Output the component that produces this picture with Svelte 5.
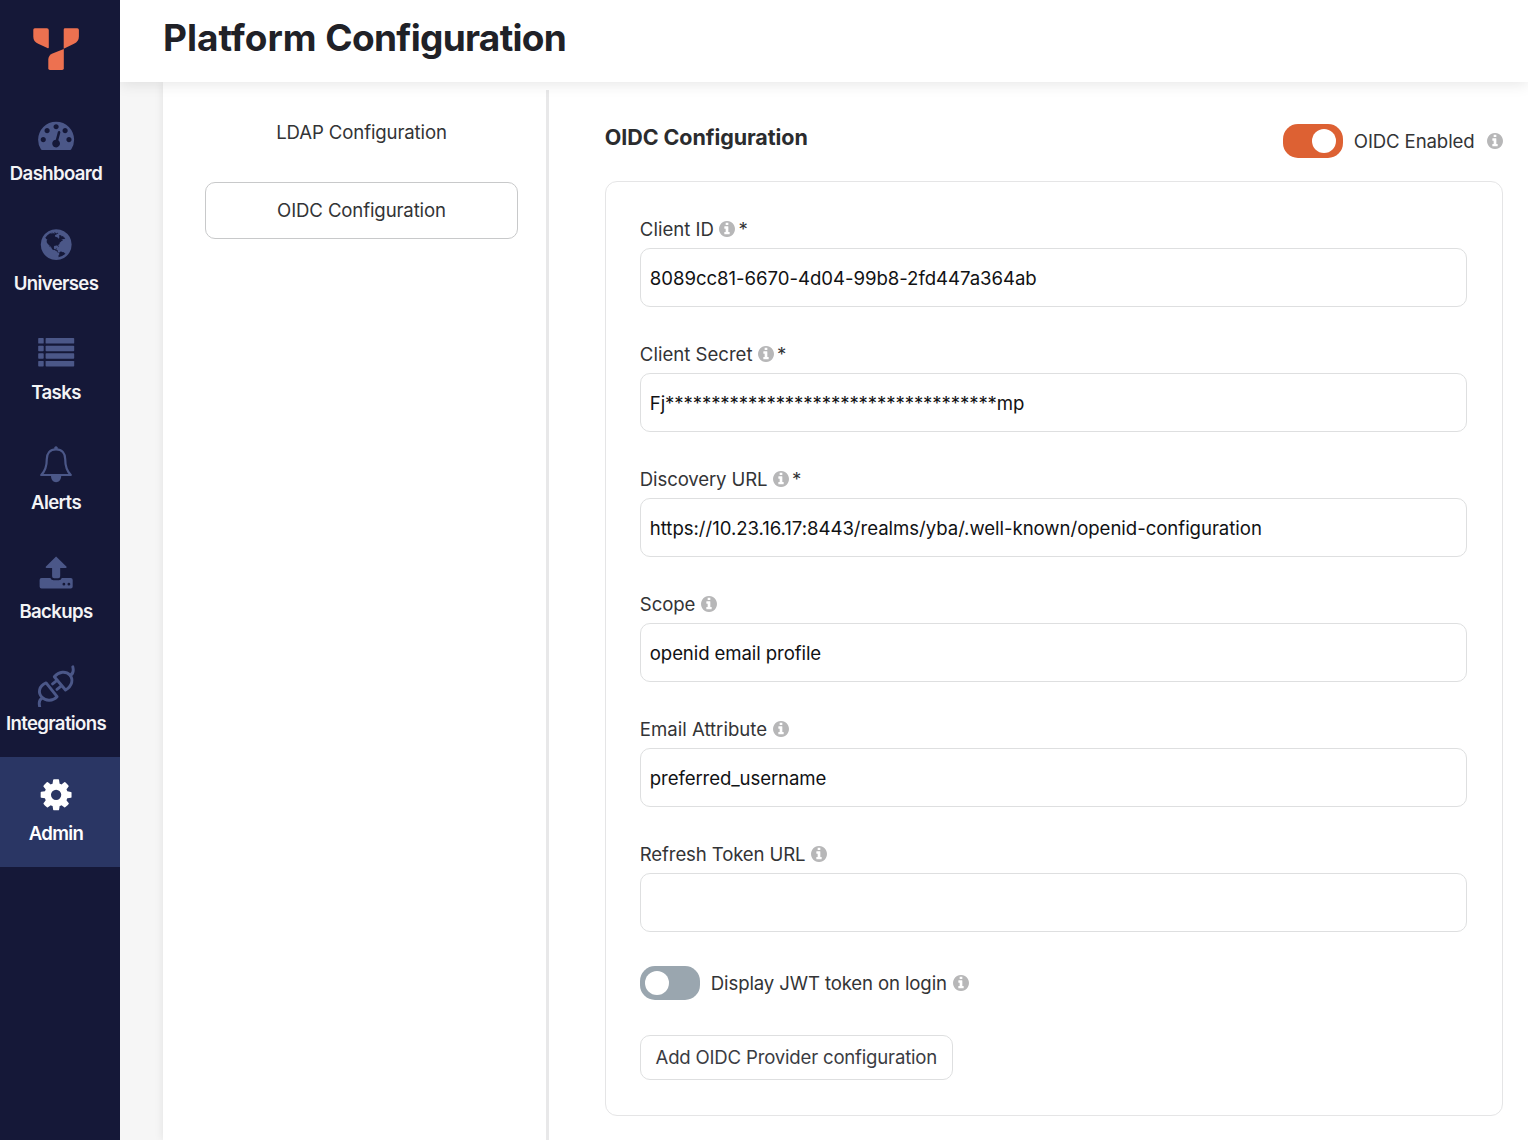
<script>
  const nav = [
    { id: 'dashboard', label: 'Dashboard', top: 97 },
    { id: 'universes', label: 'Universes', top: 206.5 },
    { id: 'tasks', label: 'Tasks', top: 316 },
    { id: 'alerts', label: 'Alerts', top: 425.5 },
    { id: 'backups', label: 'Backups', top: 535 },
    { id: 'integrations', label: 'Integrations', top: 647 },
    { id: 'admin', label: 'Admin', top: 757 }
  ];

  const fields = [
    { id: 'client-id', label: 'Client ID', required: true, value: '8089cc81-6670-4d04-99b8-2fd447a364ab' },
    { id: 'secret', label: 'Client Secret', required: true, value: 'Fj************************************mp' },
    { id: 'discovery', label: 'Discovery URL', required: true, value: 'https://10.23.16.17:8443/realms/yba/.well-known/openid-configuration' },
    { id: 'scope', label: 'Scope', required: false, value: 'openid email profile' },
    { id: 'email', label: 'Email Attribute', required: false, value: 'preferred_username' },
    { id: 'refresh', label: 'Refresh Token URL', required: false, value: '' }
  ];

  let enabled = $state(true);
  let showJwt = $state(false);
</script>

{#snippet info()}
  <svg class="info" viewBox="128 128 1536 1536" aria-hidden="true">
    <path d="M1152 1376v-160q0-14-9-23t-23-9h-96v-512q0-14-9-23t-23-9h-320q-14 0-23 9t-9 23v160q0 14 9 23t23 9h96v320h-96q-14 0-23 9t-9 23v160q0 14 9 23t23 9h448q14 0 23-9t9-23zm-128-896v-160q0-14-9-23t-23-9h-192q-14 0-23 9t-9 23v160q0 14 9 23t23 9h192q14 0 23-9t9-23zm640 416q0 209-103 385.5t-279.5 279.5-385.5 103-385.5-103-279.5-279.5-103-385.5 103-385.5 279.5-279.5 385.5-103 385.5 103 279.5 279.5 103 385.5z" />
  </svg>
{/snippet}

<div class="app">
  <aside class="sidebar">
    <div class="brand">
      <svg width="120" height="97" viewBox="0 0 120 97">
        <path d="M34.8 28.3h12.1q1.9 0 1.9 1.9v17q0 1.4-1.4.8l-9.2-4.2q-4.9-2.1-4.9-7V29.800q0-1.500 1.500-1.500z" />
        <path d="M65 28.300h12.300q1.600 0 1.600 1.600v6.700q0 5.100-4.900 7.200l-10.300 5V29.700q0-1.400 1.300-1.400z" />
        <path d="M63.800 49v19.300q0 1.600-1.600 1.600H49.900q-1.600 0-1.600-1.600v-8.700q0-4.300 4.200-6.200z" />
      </svg>
    </div>
    <nav>
      {#each nav as item (item.id)}
        <a class="nav-item {item.id}" class:active={item.id === 'admin'} href="#{item.id}">
          <svg width="112" height="60" viewBox="0 {item.top} 112 60">
            {#if item.id === 'dashboard'}
              <g transform="translate(38.1 116.500) scale(.0201)">
                <path d="M384 1152q0-53-37.5-90.5t-90.5-37.500-90.500 37.500-37.500 90.500 37.500 90.500 90.500 37.500 90.500-37.500 37.500-90.500zm192-448q0-53-37.500-90.500t-90.500-37.500-90.500 37.500-37.500 90.500 37.500 90.500 90.500 37.500 90.500-37.500 37.500-90.500zm428 481l101-382q6-26-7.500-48.500t-38.500-29.500-48 6.500-30 39.500l-101 382q-60 5-107 43.500t-63 98.500q-20 77 20 146t117 89 146-20 89-117q16-60-6-117t-72-91zm660-33q0-53-37.500-90.500t-90.500-37.500-90.500 37.500-37.500 90.500 37.500 90.500 90.500 37.500 90.500-37.500 37.500-90.500zm-640-640q0-53-37.500-90.500t-90.500-37.500-90.500 37.500-37.500 90.500 37.500 90.500 90.500 37.500 90.500-37.500 37.500-90.500zm448 192q0-53-37.500-90.500t-90.500-37.500-90.500 37.500-37.500 90.500 37.500 90.500 90.500 37.500 90.500-37.500 37.500-90.500zm320 448q0 261-141 483-19 29-54 29h-1402q-35 0-54-29-141-221-141-483 0-182 71-348t191-286 286-191 348-71 348 71 286 191 191 286 71 348z" />
              </g>
            {:else if item.id === 'universes'}
              <g transform="translate(38.200 226.100) scale(.0201)">
                <path d="M896 128q209 0 385.5 103t279.5 279.5 103 385.5-103 385.5-279.5 279.5-385.5 103-385.5-103-279.5-279.5-103-385.5 103-385.5 279.5-279.5 385.5-103zm274 521q-2 1-9.5 9.5t-13.5 9.5q2 0 4.5-5t5-11 3.5-7q6-7 22-15 14-6 52-12 34-8 51 11-2-2 9.500-13t14.500-12q3-2 15-4.500t15-7.500l2-22q-12 1-17.500-7t-6.500-21q0 2-6 8 0-7-4.500-8t-11.500 1-9 1q-10-3-15-7.500t-8-16.500-4-15q-2-5-9.500-11t-9.500-10q-1-2-2.500-5.500t-3-6.500-4-5.500-5.500-2.500-7 5-7.500 10-4.500 5q-3-2-6-1.500t-4.500 1-4.500 3-5 3.500q-3 2-8.500 3t-8.500 2q15-5-1-11-10-4-16-3 9-4 7.500-12t-8.500-14h5q-1-4-8.500-8.500t-17.500-8.500-13-6q-8-5-34-9.500t-33-.5q-5 6-4.500 10.500t4 14 3.500 12.500q1 6-5.500 13t-6.500 12q0 7 14 15.500t10 21.500q-3 8-16 16t-16 12q-5 8-1.500 18.500t10.500 16.500q2 2 1.500 4t-3.500 4.500-5.500 4-6.500 3.500l-3 2q-11 5-20.500-6t-13.500-26q-7-25-16-30-23-8-29 1-5-13-41-26-25-9-58-4 6-1 0-15-7-15-19-12 3-6 4-17.500t1-13.500q3-13 12-23 1-1 7-8.500t9.500-13.500.5-6q35 4 50-11 5-5 11.500-17t10.500-17q9-6 14-5.500t14.500 5.500 14.500 5q14 1 15.500-11t-7.500-20q12 1 3-17-4-7-8-9-12-4-27 5-8 4 2 8-1-1-9.500 10.500t-16.500 17.500-16-5q-1-1-5.500-13.500t-9.500-13.500q-8 0-16 15 3-8-11-15t-24-8q19-12-8-27-7-4-20.500-5t-19.500 4q-5 7-5.500 11.500t5 8 10.500 5.500 11.500 4 8.500 3q14 10 8 14-2 1-8.500 3.500t-11.500 4.500-6 4q-3 4 0 14t-2 14q-5-5-9-17.500t-7-16.500q7 9-25 6l-10-1q-4 0-16 2t-20.500 1-13.500-8q-4-8 0-20 1-4 4-2-4-3-11-9.500t-10-8.500q-46 15-94 41 6 1 12-1 5-2 13-6.500t10-5.500q34-14 42-7l5-5q14 16 20 25-7-4-30-1-20 6-22 12 7 12 5 18-4-3-11.500-10t-14.500-11-15-5q-16 0-22 1-146 80-235 222 7 7 12 8 4 1 5 9t2.500 11 11.500-3q9 8 3 19 1-1 44 27 19 17 21 21 3 11-10 18-1-2-9-9t-9-4q-3 5 .5 18.500t10.500 12.500q-7 0-9.500 16t-2.500 35.500-1 23.500l2 1q-3 12 5.500 34.500t21.500 19.500q-13 3 20 43 6 8 8 9 3 2 12 7.500t15 10 10 10.500q4 5 10 22.500t14 23.500q-2 6 9.500 20t10.500 23q-1 0-2.500 1t-2.500 1q3 7 15.500 14t15.500 13q1 3 2 10t3 11 8 2q2-20-24-62-15-25-17-29-3-5-5.500-15.500t-4.500-14.500q2 0 6 1.500t8.500 3.500 7.500 4 2 3q-3 7 2 17.500t12 18.500 17 19 12 13q6 6 14 19.500t0 13.500q9 0 20 10.500t17 19.500q5 8 8 26t5 24q2 7 8.500 13.500t12.500 9.500l16 8 13 7q5 2 18.500 10.500t21.500 11.500q10 4 16 4t14.500-2.500 13.500-3.500q15-2 29 15t21 21q36 19 55 11-2 1 .5 7.500t8 15.500 9 14.500 5.500 8.500q5 6 18 15t18 15q6-4 7-9-3 8 7 20t18 10q14-3 14-32-31 15-49-18 0-1-2.500-5.500t-4-8.500-2.500-8.500 0-7.500 5-3q9 0 10-3.500t-2-12.500-4-13q-1-8-11-20t-12-15q-5 9-16 8t-16-9q0 1-1.500 5.500t-1.500 6.500q-13 0-15-1 1-3 2.500-17.500t3.500-22.500q1-4 5.500-12t7.500-14.500 4-12.500-4.500-9.500-17.500-2.500q-19 1-26 20-1 3-3 10.500t-5 11.500-9 7q-7 3-24 2t-24-5q-13-8-22.500-29t-9.500-37q0-10 2.500-26.500t3-25-5.500-24.500q3-2 9-9.500t10-10.500q2-1 4.500-1.500t4.500 0 4-1.500 3-6q-1-1-4-3-3-3-4-3 7 3 28.500-1.500t27.500 1.500q15 11 22-2 0-1-2.500-9.500t-.5-13.500q5 27 29 9 3 3 15.500 5t17.500 5q3 2 7 5.500t5.500 4.500 5-.5 8.500-6.500q10 14 12 24 11 40 19 44 7 3 11 2t4.500-9.500 0-14-1.500-12.500l-1-8v-18l-1-8q-15-3-18.500-12t1.500-18.500 15-18.500q1-1 8-3.500t15.500-6.500 12.500-8q21-19 15-35 7 0 11-9-1 0-5-3t-7.500-5-4.500-2q9-5 2-16 5-3 7.500-11t7.500-10q9 12 21 2 7-8 1-16 5-7 20.500-10.500t18.500-9.500q7 2 8-2t1-12 3-12q4-5 15-9t13-5l17-11q3-4 0-4 18 2 31-11 10-11-6-20 3-6-3-9.500t-15-5.500q3-1 11.500-.5t10.500-1.500q15-10-7-16-17-5-43 12zm-163 877q206-36 351-189-3-3-12.500-4.500t-12.500-3.500q-18-7-24-8 1-7-2.500-13t-8-9-12.500-8-11-7q-2-2-7-6t-7-5.500-7.500-4.500-8.500-2-10 1l-3 1q-3 1-5.500 2.500t-5.500 3-4 3 0 2.500q-21-17-36-22-5-1-11-5.500t-10.500-7-10-1.500-11.500 7q-5 5-6 15t-2 13q-7-5 0-17.500t2-18.500q-3-6-10.500-4.500t-12 4.500-11.500 8.500-9 6.500-8.500 5.500-8.500 7.500q-3 4-6 12t-5 11q-2-4-11.500-6.500t-9.500-5.500q2 10 4 35t5 38q7 31-12 48-27 25-29 40-4 22 12 26 0 7-8 20.500t-7 21.500q0 6 2 16z" />
              </g>
            {:else if item.id === 'tasks'}
              {#each [338.100, 345.700, 353.300, 360.900] as y}
                <rect x="38.200" {y} width="5.500" height="5.500" rx=".7" />
                <rect x="45.600" {y} width="28.600" height="5.500" rx=".7" />
              {/each}
            {:else if item.id === 'alerts'}
              <path class="line" d="M56 448.900c-6.300 0-9.200 4.300-9.200 9.700 0 7.800-1.400 12-5.600 15.900h29.600c-4.200-3.900-5.600-8.100-5.600-15.900 0-5.400-2.900-9.700-9.200-9.700z" />
              <path d="M54.300 446.700q1.700-1.700 3.400 0v2.500h-3.400zM51 475.500h10.200c0 3.700-2.200 6.200-5.100 6.200S51 479.200 51 475.500z" />
            {:else if item.id === 'backups'}
              <path d="M56.100 556.600l10.500 10.100q.4 1.100-.7 1.300h-5.700v8.200q0 2-2 2h-4.100q-2 0-2-2V568h-5.700q-1.100-.2-.700-1.300z" />
              <path fill-rule="evenodd" d="M41.500 578.100h8.900q.9 2.200 3.100 2.200h5.300q2.200 0 3-2.200h9q1.900 0 1.900 1.900v6.600q0 1.900-1.900 1.900H41.500q-1.900 0-1.900-1.900V580q0-1.900 1.900-1.900zm22.400 4.700a1.400 1.400 0 100 2.800 1.400 1.400 0 000-2.800zm5 0a1.400 1.400 0 100 2.800 1.400 1.400 0 000-2.800z" />
            {:else if item.id === 'integrations'}
              <g class="line plug">
                <path d="M46.100 682.900l11 13.800c-4.200 4.400-11.200 4.800-15.100.6-4.300-4.600-3.300-11.300 4.100-14.400z" />
                <path d="M54.300 676.700c4.700-5.400 11.600-5.900 15.500-1.700 3.900 4.300 2.500 10.900-4.300 15z" />
                <path d="M42 698.300c-3.300 1.500-3.200 4.700-2.300 8.600M70.200 675.300c3.500-1.500 3.500-4.700 2.600-8.500M52.600 683.900l4.400-3.500M57 689.400l4.400-3.500" />
              </g>
            {:else}
              <g transform="translate(38.100 776.800) scale(.0201)">
                <path d="M1152 896q0-106-75-181t-181-75-181 75-75 181 75 181 181 75 181-75 75-181zm512-109v222q0 12-8 23t-20 13l-185 28q-19 54-39 91 35 50 107 138 10 12 10 25t-9 23q-27 37-99 108t-94 71q-12 0-26-9l-138-108q-44 23-91 38-16 136-29 186-7 28-36 28h-222q-14 0-24.500-8.500t-11.500-21.500l-28-184q-49-16-90-37l-141 107q-10 9-25 9-14 0-25-11-126-114-165-168-7-10-7-23 0-12 8-23 15-21 51-66.500t54-70.500q-27-50-41-99l-183-27q-13-2-21-12.500t-8-23.500v-222q0-12 8-23t19-13l186-28q14-46 39-92-40-57-107-138-10-12-10-24 0-10 9-23 26-36 98.500-107.500t94.500-71.500q13 0 26 10l138 107q44-23 91-38 16-136 29-186 7-28 36-28h222q14 0 24.500 8.500t11.500 21.500l28 184q49 16 90 37l142-107q9-9 24-9 13 0 25 10 129 119 165 170 7 8 7 22 0 12-8 23-15 21-51 66.500t-54 70.500q26 50 41 98l183 28q13 2 21 12.500t8 23.500z" />
              </g>
            {/if}
          </svg>
          <span>{item.label}</span>
        </a>
      {/each}
    </nav>
  </aside>

  <div class="page">
    <header><h1><span class="lead">Platform</span> <span class="rest">Configuration</span></h1></header>
    <main>
      <div class="panel">
        <div class="tabs">
          <button class="tab ldap">LDAP Configuration</button>
          <button class="tab selected">OIDC Configuration</button>
        </div>
        <section class="content">
          <div class="heading">
            <h2>OIDC Configuration</h2>
            <div class="enable">
              <button class="switch" class:on={enabled} aria-label="OIDC Enabled" onclick={() => (enabled = !enabled)}><i></i></button>
              <span class="enable-text">OIDC Enabled</span>
              {@render info()}
            </div>
          </div>
          <div class="card">
            {#each fields as field (field.id)}
              <div class="field">
                <div class="label">
                  <span class="name {field.id}">{field.label}</span>
                  {@render info()}
                  {#if field.required}<span class="star">*</span>{/if}
                </div>
                <div class="input {field.id}"><span>{field.value}</span></div>
              </div>
            {/each}
            <div class="jwt">
              <button class="switch" class:on={showJwt} aria-label="Display JWT token on login" onclick={() => (showJwt = !showJwt)}><i></i></button>
              <span class="jwt-text">Display JWT token on login</span>
              {@render info()}
            </div>
            <button class="add">Add OIDC Provider configuration</button>
          </div>
        </section>
      </div>
    </main>
  </div>
</div>

<style>
  :global(body) { margin: 0; background: #f6f6f6; }
  * { box-sizing: border-box; }
  .app {
    display: flex;
    height: 1140px;
    overflow: hidden;
    font-family: Inter, "Liberation Sans", sans-serif;
    font-size: 18.6px;
    color: #333436;
  }
  button { font: inherit; color: inherit; padding: 0; margin: 0; white-space: nowrap; }
  svg { display: block; flex: none; }

  .sidebar { width: 120px; flex: none; background: #151838; }
  .brand { height: 97px; fill: #ed7150; }
  .nav-item {
    display: block;
    height: 109.5px;
    fill: #4b5788;
    color: #f4f4f6;
    text-decoration: none;
    font-weight: 600;
    font-size: 18.6px;
    letter-spacing: -0.63px;
  }
  .nav-item span { display: block; width: 112px; line-height: 32px; text-align: center; white-space: nowrap; }
  .nav-item.backups { height: 112px; }
  .nav-item.active { height: 110px; background: #2a3664; fill: #fff; color: #fff; }
  .line { fill: none; stroke: #4b5788; stroke-width: 2.2; stroke-linejoin: round; stroke-linecap: round; }
  .plug { stroke-width: 2.9; }

  .page { flex: 1; min-width: 0; display: flex; flex-direction: column; }
  header {
    position: relative;
    z-index: 1;
    height: 82px;
    flex: none;
    padding: 15px 0 0 43px;
    background: #fff;
    box-shadow: 0 2px 14px rgba(0, 0, 0, .1);
    clip-path: inset(0 0 -30px 0);
  }
  h1 { margin: 0; font-size: 37px; line-height: 46px; font-weight: 700; color: #202127; white-space: nowrap; }
  .lead { letter-spacing: 0; }
  .rest { letter-spacing: -0.7px; }
  main { flex: 1; padding-left: 43px; }
  .panel { display: flex; height: 100%; background: #fff; box-shadow: 0 0 9px rgba(0, 0, 0, .09); }
  .tabs {
    width: 386px;
    flex: none;
    margin-top: 8px;
    padding: 13px 29px 0 42px;
    border-right: 3px solid #e8e8e9;
    display: flex;
    flex-direction: column;
    gap: 22px;
  }
  .tab { width: 313px; height: 57px; border: 1px solid transparent; border-radius: 10px; background: #fff; letter-spacing: -0.13px; }
  .ldap { background: none; }
  .tab.selected { border-color: #c8c9ca; padding-bottom: 1px; }

  .content { flex: 1; padding: 42px 25.5px 0 55.8px; }
  .heading { display: flex; justify-content: space-between; height: 57px; }
  h2 { margin: 0; font-size: 21.5px; line-height: 26px; font-weight: 700; letter-spacing: -0.08px; color: #2b2c2e; }
  .enable { display: flex; align-items: center; height: 34px; }
  .enable-text { margin: 0 12px 1px 11px; letter-spacing: -0.12px; }
  .switch { width: 60px; height: 34px; border: 0; border-radius: 15px; background: #9aa6af; padding: 5px; display: flex; }
  .switch i { display: block; width: 24px; height: 24px; border-radius: 50%; background: #fff; }
  .switch.on { background: #dd6133; justify-content: flex-end; padding-right: 7px; }
  .info { width: 16px; height: 16px; fill: #b7b7b8; }

  .card { height: 934.5px; border: 1px solid #e5e5e6; border-radius: 12px; padding: 34px 34.5px 0 34px; }
  .field { height: 125px; }
  .label { display: flex; align-items: center; height: 26px; margin-bottom: 6px; letter-spacing: -0.08px; }
  .name { margin-right: 5.5px; }
  .star { margin-left: 3px; }
  .name.client-id, .name.secret, .name.email { letter-spacing: 0; }
  .name.discovery, .name.refresh { letter-spacing: -0.13px; }
  .input { height: 59px; border: 1px solid #dedfe0; border-radius: 10px; display: flex; align-items: center; padding-left: 9px; color: #111214; white-space: nowrap; letter-spacing: -0.04px; }
  .input.secret, .input.scope, .input.email { letter-spacing: -0.1px; }
  .jwt { display: flex; align-items: center; height: 34px; }
  .jwt-text { margin: 0 6px 0 11px; letter-spacing: -0.13px; }
  .add { display: block; margin-top: 35px; padding-bottom: 1px; width: 313px; height: 45px; border: 1px solid #dedfe0; border-radius: 10px; background: #fff; color: #3b3c43; letter-spacing: -0.2px; }
</style>
